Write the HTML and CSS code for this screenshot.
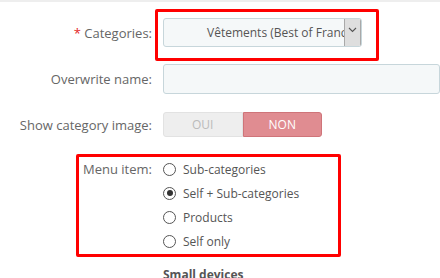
FILE: index.html
```html
<!DOCTYPE html>
<html lang="fr">
<head>
    <meta charset="UTF-8">
    <meta name="viewport" content="width=device-width, initial-scale=1.0">
    <title>Menu item</title>
    <link rel="stylesheet" href="styles.css">
</head>
<body>
    <div class="panel">
        <div class="row row-cat">
            <label class="label"><span class="required">*</span> Categories:</label>
            <div class="select">
                <span class="select-text">Vêtements (Best of France)</span>
                <span class="select-arrow">
                    <svg width="9" height="6" viewBox="0 0 9 6"><polyline points="1,1 4.5,4.5 8,1" fill="none" stroke="#555" stroke-width="1.1"/></svg>
                </span>
            </div>
            <div class="mark mark-cat"></div>
        </div>
        <div class="row row-name">
            <label class="label">Overwrite name:</label>
            <input type="text" class="input">
        </div>
        <div class="row row-image">
            <label class="label">Show category image:</label>
            <div class="switch">
                <span class="switch-opt">OUI</span>
                <span class="switch-opt active">NON</span>
            </div>
        </div>
        <div class="row row-menu">
            <label class="label">Menu item:</label>
            <div class="radios">
                <label class="radio"><span class="dot"></span>Sub-categories</label>
                <label class="radio"><span class="dot checked"></span>Self + Sub-categories</label>
                <label class="radio"><span class="dot"></span>Products</label>
                <label class="radio"><span class="dot"></span>Self only</label>
            </div>
            <div class="mark mark-menu"></div>
        </div>
        <div class="row row-devices">
            <span class="label"></span>
            <div class="devices">Small devices</div>
        </div>
    </div>
</body>
</html>
```

FILE: styles.css
```css
body {
    margin: 0;
    font-family: "Open Sans", "DejaVu Sans", sans-serif;
    font-size: 13px;
    color: #555;
    background: #fff;
    overflow: hidden;
}
.panel {
    border-top: 2px solid #eeeeee;
    padding-top: 16px;
}
.row {
    position: relative;
    display: flex;
    align-items: center;
}
.label {
    width: 152px;
    flex: none;
    text-align: right;
    color: #666;
    margin-right: 11px;
}
.required {
    color: #e3261f;
}
.select {
    display: flex;
    width: 197px;
    height: 27px;
    border: 1px solid #c7d6db;
    border-radius: 3px;
    background: #f5f8f9;
    overflow: hidden;
}
.select-text {
    flex: 1;
    padding-left: 43px;
    line-height: 27px;
    font-size: 12px;
    white-space: nowrap;
    overflow: hidden;
    color: #555;
}
.select-arrow {
    width: 17px;
    flex: none;
    display: flex;
    align-items: flex-start;
    padding-top: 8px;
    justify-content: center;
    background: #dedede;
    border-left: 1px solid #a9a9a9;
    border-right: 1px solid #a9a9a9;
    height: 27px;
    box-sizing: border-box;
}
.row-name {
    margin-top: 17px;
}
.input {
    height: 30px;
    width: 300px;
    box-sizing: border-box;
    border: 1px solid #c7d6db;
    border-radius: 3px;
    background: #f5f8f9;
}
.row-image {
    margin-top: 18px;
}
.switch {
    display: flex;
    width: 159px;
    height: 25px;
    font-size: 12px;
}
.switch-opt {
    flex: 1;
    display: flex;
    align-items: center;
    justify-content: center;
    background: #eeeeee;
    border: 1px solid #e2e2e2;
    color: #bbbbbb;
    border-radius: 3px 0 0 3px;
}
.switch-opt.active {
    background: #e08c91;
    border-color: #cf7479;
    color: #fff;
    border-radius: 0 3px 3px 0;
}
.row-menu {
    margin-top: 20px;
    align-items: flex-start;
}
.row-menu .label {
    line-height: 24px;
}
.radios {
    display: flex;
    flex-direction: column;
}
.radio {
    display: flex;
    align-items: center;
    height: 24px;
    font-size: 12px;
    color: #555;
}
.dot {
    width: 11px;
    height: 11px;
    border: 1px solid #555;
    border-radius: 50%;
    margin-right: 7px;
    display: flex;
    align-items: center;
    justify-content: center;
}
.dot.checked::after {
    content: "";
    width: 6px;
    height: 6px;
    border-radius: 50%;
    background: #333;
}
.row-devices {
    margin-top: 13px;
}
.devices {
    font-size: 12px;
    font-weight: bold;
    color: #555;
}
.mark {
    position: absolute;
    border: 3px solid #ff0000;
    border-radius: 2px;
    box-sizing: border-box;
}
.mark-cat {
    left: 155px;
    top: -9px;
    width: 224px;
    height: 52px;
}
.mark-menu {
    left: 76px;
    top: -3px;
    width: 265px;
    height: 103px;
}
```
